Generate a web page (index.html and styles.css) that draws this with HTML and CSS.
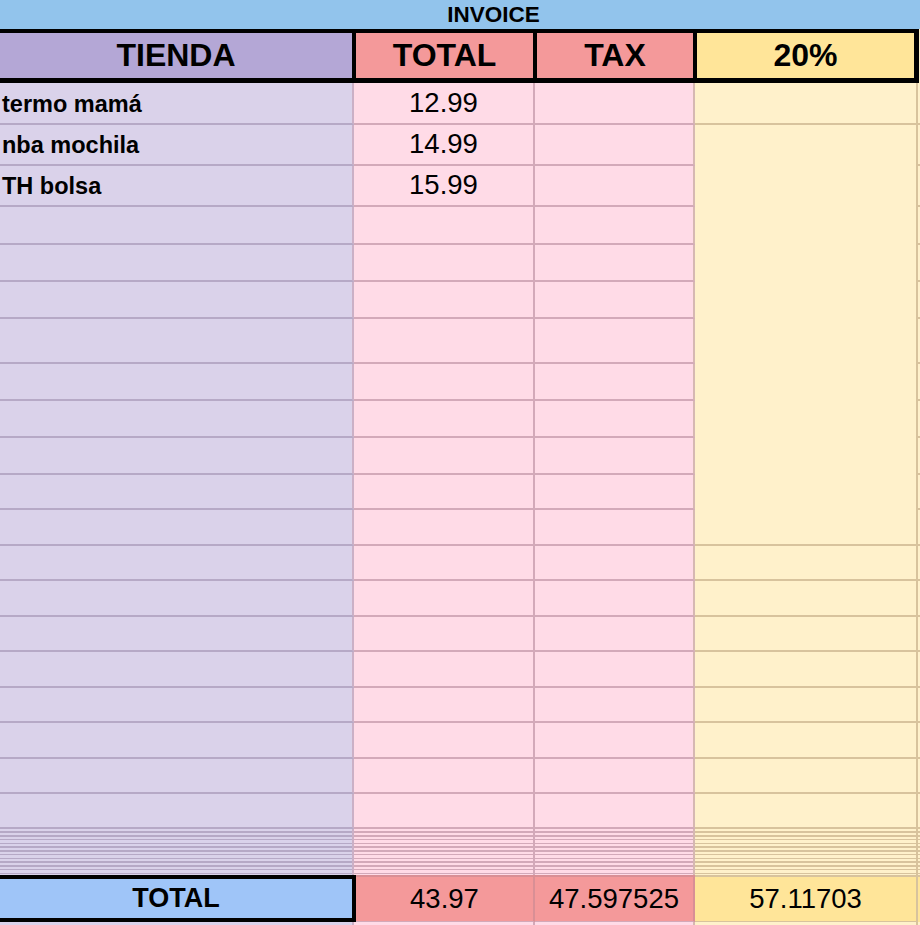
FILE: index.html
```html
<!DOCTYPE html>
<html lang="es">
<head>
<meta charset="utf-8">
<title>Invoice</title>
<link rel="stylesheet" href="styles.css">
</head>
<body>
<div class="title">INVOICE</div>
<div class="head">
  <div class="hc h-a">TIENDA</div>
  <div class="hc h-b">TOTAL</div>
  <div class="hc h-c">TAX</div>
  <div class="hc h-d">20%</div>
  <div class="h-e"></div>
</div>
<div class="grid">
  <div class="merged d"></div>
  <!-- row 1 -->
  <div class="a name">termo mamá</div><div class="b num">12.99</div><div class="c"></div><div class="d"></div><div class="e"></div>
  <!-- rows 2-12 (D merged) -->
  <div class="a name">nba mochila</div><div class="b num">14.99</div><div class="c"></div><div class="e"></div>
  <div class="a name">TH bolsa</div><div class="b num">15.99</div><div class="c"></div><div class="e"></div>
  <div class="a"></div><div class="b"></div><div class="c"></div><div class="e"></div>
  <div class="a"></div><div class="b"></div><div class="c"></div><div class="e"></div>
  <div class="a"></div><div class="b"></div><div class="c"></div><div class="e"></div>
  <div class="a"></div><div class="b"></div><div class="c"></div><div class="e"></div>
  <div class="a"></div><div class="b"></div><div class="c"></div><div class="e"></div>
  <div class="a"></div><div class="b"></div><div class="c"></div><div class="e"></div>
  <div class="a"></div><div class="b"></div><div class="c"></div><div class="e"></div>
  <div class="a"></div><div class="b"></div><div class="c"></div><div class="e"></div>
  <div class="a"></div><div class="b"></div><div class="c"></div><div class="e"></div>
  <!-- rows 13-20 -->
  <div class="a"></div><div class="b"></div><div class="c"></div><div class="d"></div><div class="e"></div>
  <div class="a"></div><div class="b"></div><div class="c"></div><div class="d"></div><div class="e"></div>
  <div class="a"></div><div class="b"></div><div class="c"></div><div class="d"></div><div class="e"></div>
  <div class="a"></div><div class="b"></div><div class="c"></div><div class="d"></div><div class="e"></div>
  <div class="a"></div><div class="b"></div><div class="c"></div><div class="d"></div><div class="e"></div>
  <div class="a"></div><div class="b"></div><div class="c"></div><div class="d"></div><div class="e"></div>
  <div class="a"></div><div class="b"></div><div class="c"></div><div class="d"></div><div class="e"></div>
  <div class="a"></div><div class="b"></div><div class="c"></div><div class="d"></div><div class="e"></div>
  <!-- hidden rows stripes -->
  <div class="a stripe"></div><div class="b stripe"></div><div class="c stripe"></div><div class="d stripe"></div><div class="e stripe"></div>
</div>
<div class="total">
  <div class="t-a">TOTAL</div>
  <div class="t-b tnum">43.97</div>
  <div class="t-c tnum">47.597525</div>
  <div class="t-d tnum">57.11703</div>
  <div class="t-e"></div>
</div>
<div class="after">
  <div class="a"></div><div class="b"></div><div class="c"></div><div class="d"></div><div class="e"></div>
</div>
</body>
</html>
```
FILE: styles.css
```css
html, body {
  margin: 0;
  padding: 0;
  background: #ffffff;
}
body {
  width: 920px;
  height: 925px;
  overflow: hidden;
  font-family: "Liberation Sans", Arial, sans-serif;
  color: #000;
}
.title {
  height: 29px;
  background: #92c4ec;
  display: flex;
  align-items: center;
  justify-content: center;
  padding-left: 67px;
  font-weight: bold;
  font-size: 22.5px;
  box-sizing: border-box;
}
.head {
  display: grid;
  grid-template-columns: 356px 181px 160px 222px 1fr;
  height: 54px;
}
.hc {
  box-sizing: border-box;
  border-top: 4px solid #000;
  border-bottom: 5px solid #000;
  border-right: 4px solid #000;
  display: flex;
  align-items: center;
  justify-content: center;
  font-weight: bold;
  font-size: 32px;
}
.h-a { background: #b4a7d6; }
.h-b, .h-c { background: #f4999a; }
.h-d { background: #ffe599; border-right-width: 5px; }
.h-e { background: #fff1cb; }

.grid {
  display: grid;
  grid-template-columns: 354px 181px 160px 223px 1fr;
  grid-template-rows: 42px 41px 41px 38px 37px 37px 45px 37px 37px 37px 35px 36px 35px 36px 35px 36px 35px 36px 35px 35px 46px;
}
.grid > div, .after > div {
  box-sizing: border-box;
}
.merged {
  grid-column: 4;
  grid-row: 2 / span 11;
}
.a {
  background: #dad2ea;
  border-bottom: 2px solid #b6a9c6;
  border-right: 2px solid #cbb0c6;
}
.b {
  background: #ffdbe7;
  border-bottom: 2px solid #d3a9b9;
  border-right: 2px solid #d3a9b9;
}
.c {
  background: #ffdbe7;
  border-bottom: 2px solid #d3a9b9;
  border-right: 2px solid #d6b8b2;
}
.d {
  background: #fff1cb;
  border-bottom: 2px solid #d8c39d;
  border-right: 2px solid #d8c39d;
}
.e {
  background: #fff1cb;
  border-bottom: 2px solid #d8c39d;
}
.name {
  display: flex;
  align-items: flex-end;
  padding: 0 0 5px 2px;
  font-weight: bold;
  font-size: 23.5px;
  white-space: nowrap;
}
.num {
  display: flex;
  align-items: flex-end;
  justify-content: center;
  padding-bottom: 4px;
  font-size: 27.5px;
}
.stripe {
  border-bottom: none;
}
.a.stripe {
  background: #dad2ea repeating-linear-gradient(to bottom, transparent 0 2.3px, #b6a9c6 2.3px 3.77px);
}
.b.stripe, .c.stripe {
  background: #ffdbe7 repeating-linear-gradient(to bottom, transparent 0 2.3px, #d3a9b9 2.3px 3.77px);
}
.d.stripe, .e.stripe {
  background: #fff1cb repeating-linear-gradient(to bottom, transparent 0 2.3px, #d8c39d 2.3px 3.77px);
}

.total {
  display: grid;
  grid-template-columns: 356px 179px 160px 223px 1fr;
  height: 47px;
}
.total > div {
  box-sizing: border-box;
  display: flex;
  align-items: center;
  justify-content: center;
}
.t-a {
  background: #9fc5f8;
  border-top: 4px solid #000;
  border-bottom: 4px solid #000;
  border-right: 4px solid #000;
  font-weight: bold;
  font-size: 27px;
}
.tnum {
  font-size: 27.5px;
}
.t-b, .t-c {
  background: #f4999a;
  border-top: 2px solid #d98f95;
  border-bottom: 1px solid #d3a9b9;
  border-right: 2px solid #d98f95;
}
.t-d {
  background: #ffe599;
  border-top: 2px solid #d8c39d;
  border-bottom: 1px solid #d8c39d;
  border-right: 2px solid #d8c39d;
}
.t-e {
  background: #ffe599;
  border-top: 2px solid #d8c39d;
}
.after {
  display: grid;
  grid-template-columns: 354px 181px 160px 223px 1fr;
  height: 10px;
}
```
